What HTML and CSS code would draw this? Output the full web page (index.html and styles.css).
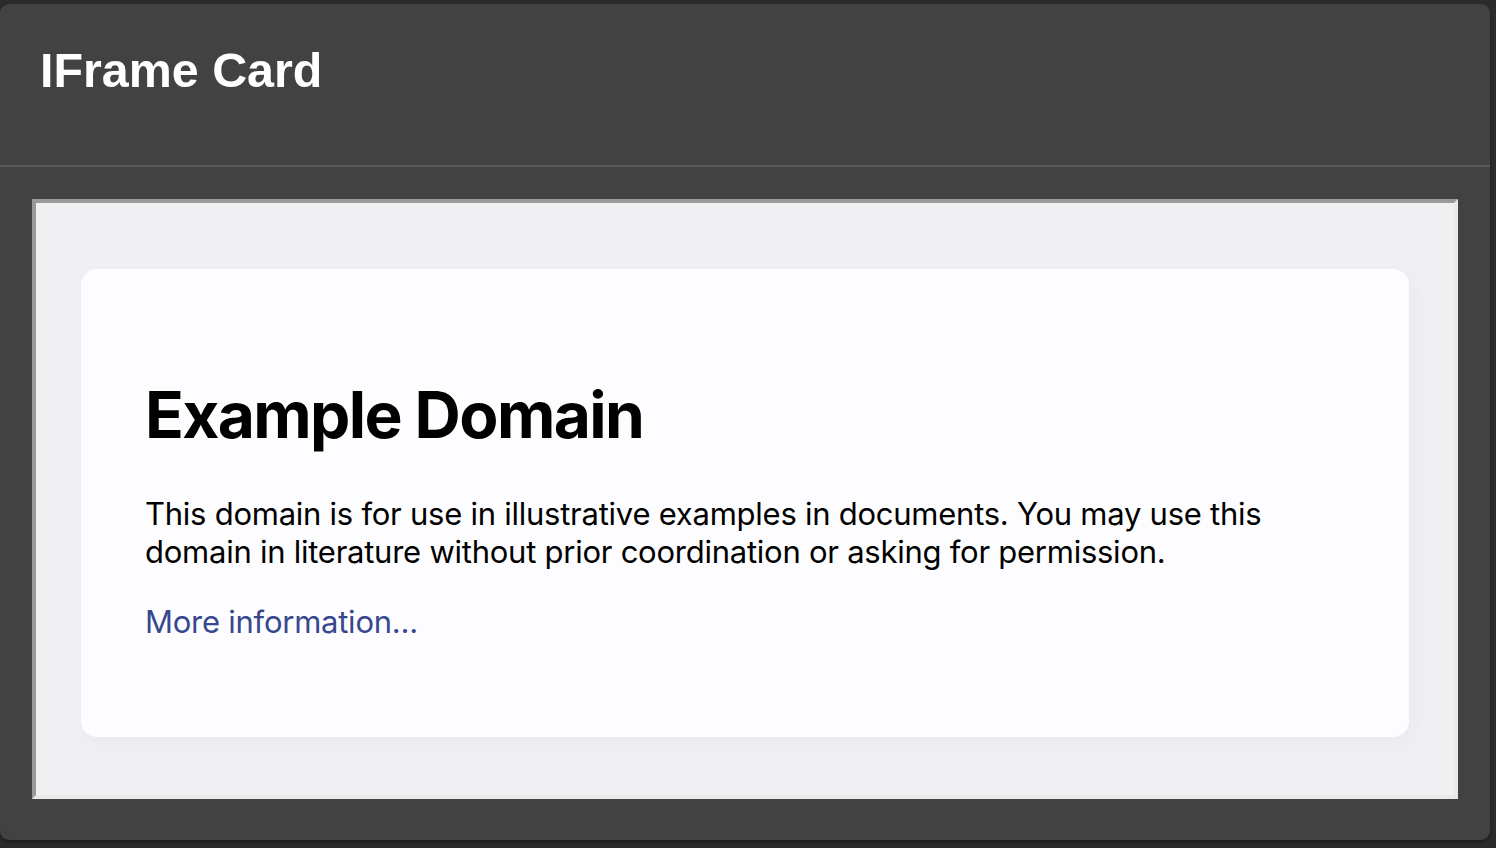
FILE: index.html
```html
<!DOCTYPE html>
<html>
<head>
<meta charset="utf-8">
<link rel="stylesheet" href="styles.css">
</head>
<body>
<div class="card">
  <div class="card-header">IFrame Card</div>
  <div class="card-body">
    <div class="frame">
      <div class="page">
        <div class="box">
          <h1 class="title">Example Domain</h1>
          <p class="text">This domain is for use in illustrative examples in documents. You may use this domain in literature without prior coordination or asking for permission.</p>
          <p class="text"><a class="link" href="#">More information...</a></p>
        </div>
      </div>
    </div>
  </div>
</div>
</body>
</html>
```

FILE: styles.css
```css
html, body {
  margin: 0;
  height: 100%;
}
body {
  background: #2b2b2b;
  padding: 4px 6px 8px 0;
  box-sizing: border-box;
  display: flex;
}
.card {
  flex: 1;
  background: #424242;
  border-radius: 9px;
  box-shadow: 0 2px 3px rgba(0, 0, 0, 0.35);
  display: flex;
  flex-direction: column;
}
.card-header {
  height: 163px;
  box-sizing: border-box;
  padding: 34px 0 0 40px;
  font-family: "Liberation Sans", Arial, sans-serif;
  font-weight: 700;
  font-size: 48.4px;
  line-height: 64px;
  color: #ffffff;
  border-bottom: 2px solid #585858;
}
.card-body {
  padding: 32px 32px 39px 32px;
}
.frame {
  height: 600px;
  box-sizing: border-box;
  border-style: solid;
  border-width: 4px;
  border-color: #9a9a9a #e9e9e9 #e9e9e9 #9a9a9a;
  background: #f0f0f2;
  overflow: hidden;
}
.page {
  padding-top: 66px;
}
.box {
  width: 1200px;
  margin: 0 auto;
  padding: 64px;
  background: #fdfdff;
  border-radius: 16px;
  box-shadow: 4px 6px 14px 4px rgba(0, 0, 0, 0.02);
  font-family: Inter, "Noto Sans", sans-serif;
  color: #000;
}
.title {
  margin: 43px 0 41px;
  font-size: 64px;
  line-height: 78px;
  font-weight: 700;
  letter-spacing: -1.6px;
}
.text {
  margin: 0 0 32px;
  font-size: 31px;
  line-height: 38px;
  letter-spacing: -0.25px;
}
.text:last-child {
  margin-bottom: 32px;
}
.link {
  color: #38488f;
  text-decoration: none;
}
```
